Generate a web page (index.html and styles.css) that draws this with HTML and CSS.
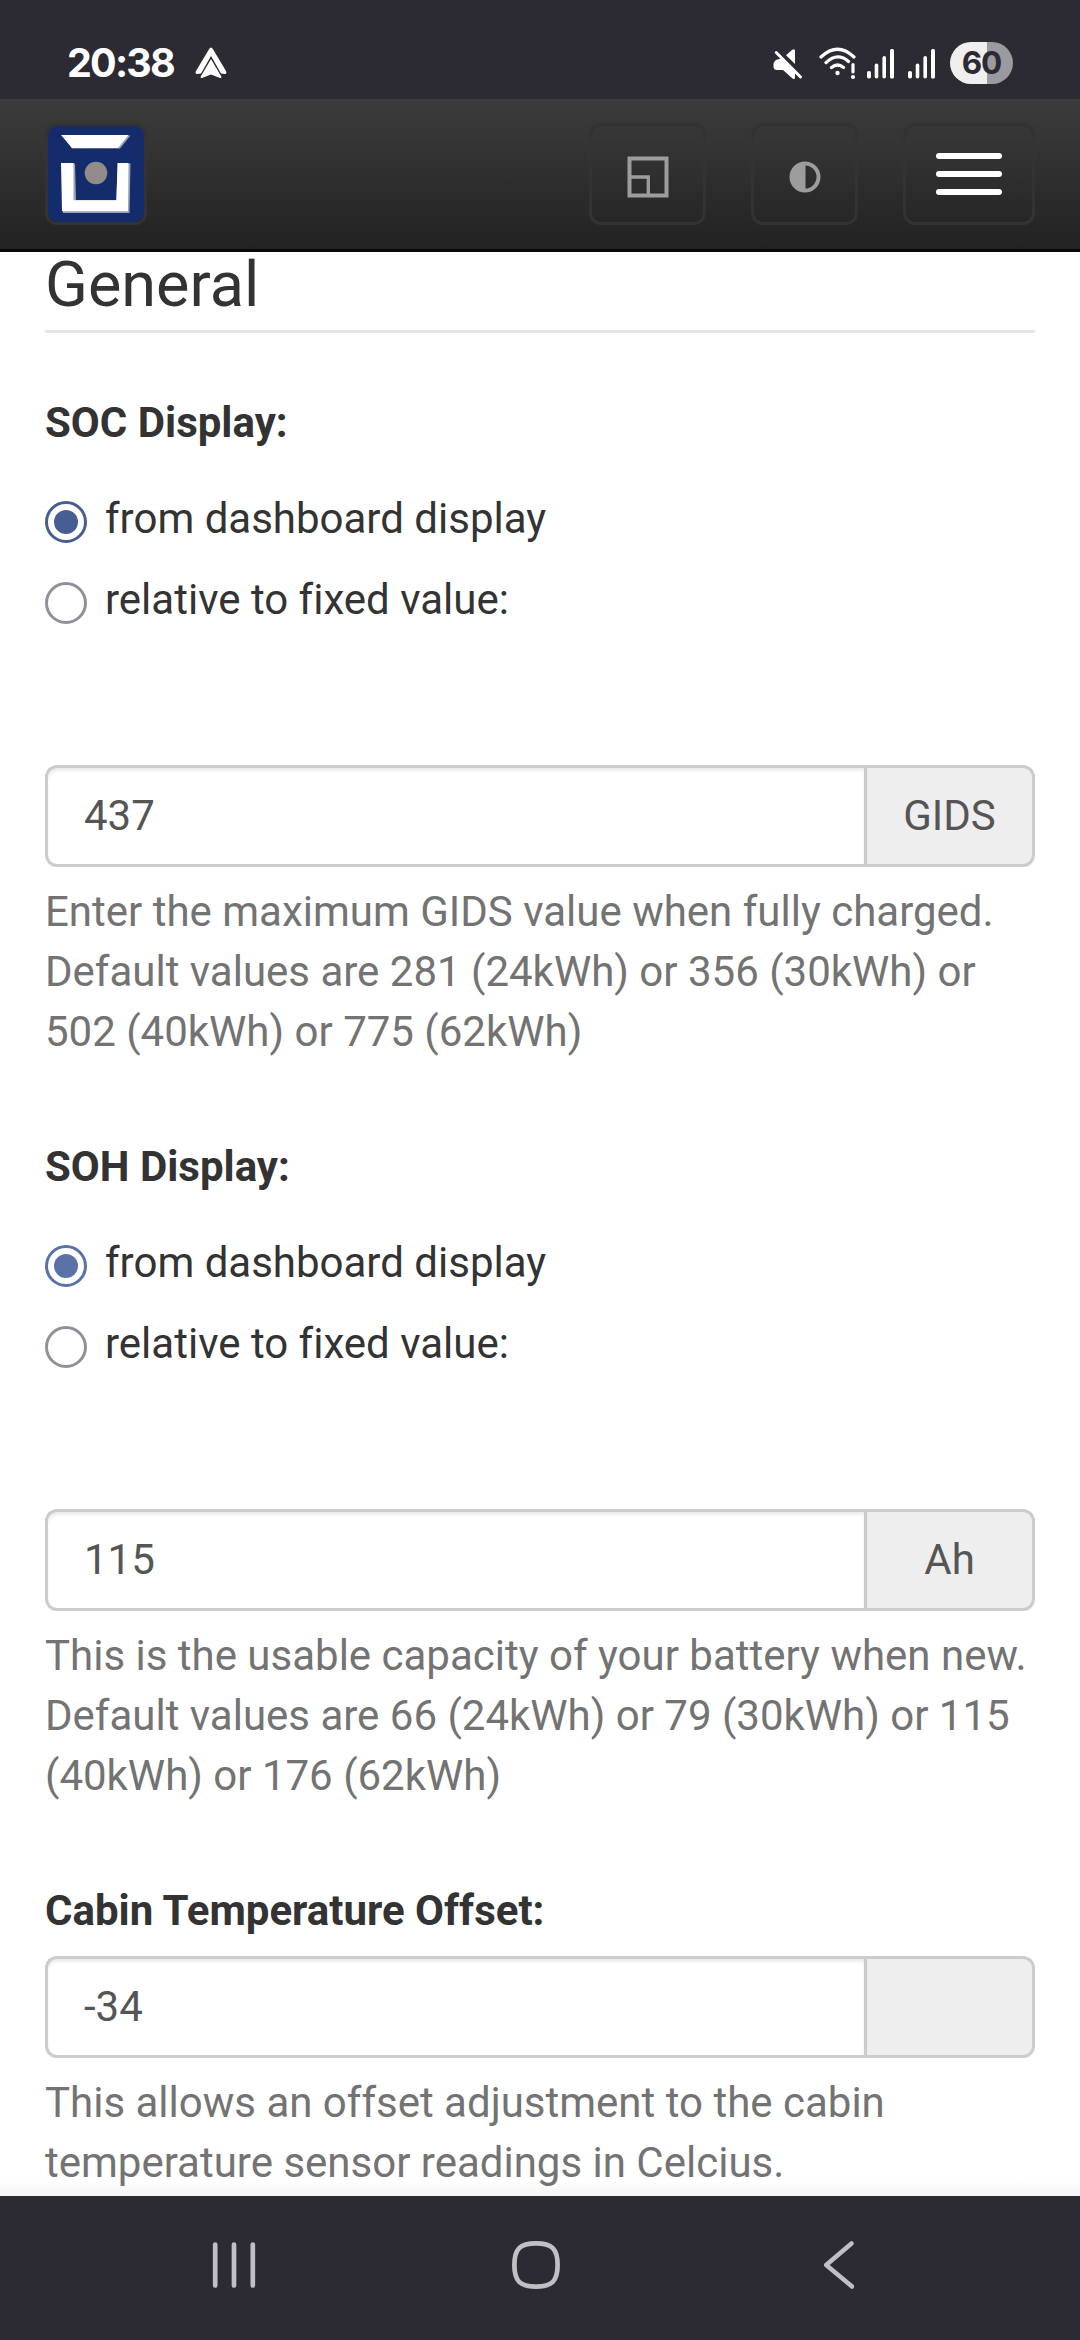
FILE: index.html
```html
<!DOCTYPE html>
<html lang="en">
<head>
<meta charset="utf-8">
<title>General</title>
<link rel="stylesheet" href="styles.css">
</head>
<body>
<div class="screen">
  <div class="statusbar">
    <span class="clock">20:38</span>
    <svg class="auto-icon" width="32" height="32" viewBox="0 0 32 32" fill="#fff"><path d="M14 2.2Q16 -1 18 2.2L31 24Q32.3 27.2 29.5 27L26 26.5L16 9L6 26.5L2.500 27Q-.3 27.200 1 24Z"/><path d="M16 12L26.300 29.500Q26.800 31.500 25 31L16 27.500L7 31Q5.200 31.500 5.700 29.500Z"/></svg>
    <div class="status-icons">
      <svg class="mute" width="30" height="32" viewBox="0 0 30 32"><path fill="#fff" d="M1.500 12.500Q3 10 7 10L10 9.800L22 22V28.500Q22 31 19.500 29.500L10 21H4Q.500 21 .500 17.500V14.500ZM13 6.200L19 1Q22 -1 22 2V15Z"/><path d="M3.200 3.500L27.500 28" stroke="#fff" stroke-width="3" stroke-linecap="round"/></svg>
      <svg class="wifi" width="38" height="33" viewBox="0 0 38 33" fill="none" stroke="#fff" stroke-width="3.200" stroke-linecap="round"><path d="M2 10Q18.500 -5.500 35 10M7 15.600Q18.500 4.800 29.500 14.500M12.500 20.500Q18.500 15.500 24.500 20.500M34 17.500V25"/><circle cx="18.500" cy="26" r="2.200" fill="#fff" stroke="none"/><circle cx="34" cy="30" r="2.100" fill="#fff" stroke="none"/></svg>
      <svg class="signal" width="28" height="30" viewBox="0 0 28 30" fill="#fff"><rect x="0" y="22" width="4" height="7.500" rx="1.800"/><rect x="7.700" y="14.500" width="3.600" height="15" rx="1.800"/><rect x="15.400" y="7" width="3.600" height="22.500" rx="1.800"/><rect x="23" y="0" width="4" height="29.500" rx="1.500"/></svg>
      <svg class="signal" width="28" height="30" viewBox="0 0 28 30" fill="#fff"><rect x="0" y="22" width="4" height="7.500" rx="1.800"/><rect x="7.700" y="14.500" width="3.600" height="15" rx="1.800"/><rect x="15.400" y="7" width="3.600" height="22.500" rx="1.800"/><rect x="23" y="0" width="4" height="29.500" rx="1.500"/></svg>
      <span class="battery">60</span>
    </div>
  </div>

  <header class="navbar">
    <a class="brand">
      <svg width="96" height="96" viewBox="0 0 96 96"><rect width="96" height="96" rx="10" fill="#142b6c"/><path fill="#98a3b8" d="M15 9.500H82.500L72 22.500H24ZM14 37.500H27L28 74H68L70 37.500H82.500L81.500 87H15Z"/><path fill="#fff" d="M13 9H80.500L70 22H24ZM13 37H25.500V74.300H68.500L69.500 37H80.500L80 85.300H14Z"/><circle cx="48" cy="47" r="11.300" fill="#928b89"/></svg>
    </a>
    <div class="nav-buttons">
      <button class="nav-btn size-btn"><svg width="42" height="42" viewBox="0 0 42 42" fill="none" stroke="#9d9d9d"><path stroke-width="4" d="M2.500 2.500H39.500V39.500H2.500Z"/><path stroke-width="3.300" d="M3 21H21.300V38"/></svg></button>
      <button class="nav-btn contrast-btn"><svg width="32" height="32" viewBox="0 0 32 32"><circle cx="16" cy="16" r="13.500" fill="none" stroke="#9d9d9d" stroke-width="4"/><path fill="#9d9d9d" d="M16.500 2A14 14 0 0 0 16.500 30Z"/></svg></button>
      <button class="nav-btn menu-btn"><span class="icon-bar"></span><span class="icon-bar"></span><span class="icon-bar"></span></button>
    </div>
  </header>

  <main class="content">
    <h2 class="legend">General</h2>

    <section class="form-group">
      <div class="label">SOC Display:</div>
      <div class="radios">
        <label class="radio"><input type="radio" name="soc" checked>from dashboard display</label>
        <label class="radio"><input type="radio" name="soc">relative to fixed value:</label>
      </div>
      <div class="input-group"><input class="field" type="text" value="437"><span class="addon">GIDS</span></div>
      <p class="help">Enter the maximum GIDS value when fully charged. Default values are 281 (24kWh) or 356 (30kWh) or 502 (40kWh) or 775 (62kWh)</p>
    </section>

    <section class="form-group">
      <div class="label">SOH Display:</div>
      <div class="radios">
        <label class="radio light"><input type="radio" name="soh" checked>from dashboard display</label>
        <label class="radio"><input type="radio" name="soh">relative to fixed value:</label>
      </div>
      <div class="input-group"><input class="field" type="text" value="115"><span class="addon">Ah</span></div>
      <p class="help">This is the usable capacity of your battery when new. Default values are 66 (24kWh) or 79 (30kWh) or 115 (40kWh) or 176 (62kWh)</p>
    </section>

    <section class="form-group">
      <div class="label">Cabin Temperature Offset:</div>
      <div class="input-group"><input class="field" type="text" value="-34"><span class="addon"></span></div>
      <p class="help">This allows an offset adjustment to the cabin temperature sensor readings in Celcius.</p>
    </section>
  </main>

  <nav class="sysnav">
    <svg width="44" height="48" viewBox="0 0 44 48" fill="none" stroke="#c0bfc4" stroke-width="4.700" stroke-linecap="round"><path d="M3.200 3.500V44.500M22 3.500V44.500M40.800 3.500V44.500"/></svg>
    <svg class="home" width="48" height="48" viewBox="0 0 48 48" fill="none" stroke="#c0bfc4" stroke-width="4.700"><path d="M24 2.400C40 2.400 45.600 8 45.600 24S40 45.600 24 45.600S2.400 40 2.400 24S8 2.400 24 2.400Z"/></svg>
    <svg width="30" height="48" viewBox="0 0 30 48" fill="none" stroke="#c0bfc4" stroke-width="4.500" stroke-linecap="round" stroke-linejoin="round"><path d="M27.500 2.500L2.200 24L28 45.500"/></svg>
  </nav>
</div>
</body>
</html>
```
FILE: styles.css
```css
* { box-sizing: border-box; }
body {
  margin: 0;
  background: #fff;
  color: #333;
  font: 42px/60px Roboto, sans-serif;
  font-variant-ligatures: none;
}
.screen {
  display: flex;
  flex-direction: column;
  width: 1080px;
  height: 2340px;
  overflow: hidden;
}

/* Status bar */
.statusbar {
  display: flex;
  align-items: flex-start;
  flex: none;
  height: 99px;
  padding: 42px 67px 0;
  background: #2c2a33;
  color: #fff;
}
.clock {
  width: 128px;
  font: 700 39.500px/42px Inter, sans-serif;
  letter-spacing: -1.800px;
}
.auto-icon { margin-top: 5px; }
.status-icons {
  display: flex;
  align-items: flex-start;
  margin-left: auto;
}
.mute { margin: 7px 16px 0 0; }
.wifi { margin: 5px 10px 0 0; }
.signal { margin: 7px 13px 0 0; }
.signal + .battery { margin-left: 1px; }
.battery {
  width: 63px;
  height: 42px;
  border-radius: 21px;
  background: linear-gradient(90deg, #efefef 37.500px, #9b9a9f 37.500px);
  color: #2c2a33;
  font: 700 31.500px/41px Inter, sans-serif;
  letter-spacing: -1px;
  text-align: center;
}

/* Navigation bar */
.navbar {
  display: flex;
  justify-content: space-between;
  align-items: flex-start;
  flex: none;
  height: 153px;
  padding: 24px 45px 0;
  border-bottom: 3px solid #080808;
  background: linear-gradient(#3c3c3c, #222);
}
.brand {
  width: 102px;
  height: 102px;
  border: 3px solid #333;
  border-radius: 12px;
  line-height: 0;
}
.nav-buttons {
  display: flex;
  gap: 45px;
}
.nav-btn {
  display: flex;
  align-items: center;
  justify-content: center;
  height: 102px;
  padding: 5px 0 0;
  border: 3px solid #333;
  border-radius: 12px;
  background: none;
}
.size-btn { width: 117px; }
.contrast-btn { width: 107px; }
.menu-btn {
  flex-direction: column;
  gap: 12px;
  width: 132px;
  padding: 0;
}
.icon-bar {
  width: 66px;
  height: 6px;
  border-radius: 3px;
  background: #fff;
}

/* Settings form */
.content {
  flex: 1;
  min-height: 0;
  overflow: hidden;
  padding: 0 45px;
  background: linear-gradient(transparent calc(100% - 15px), #f4f4f4) #fff;
}
.legend {
  height: 81px;
  margin: 0 0 60px;
  border-bottom: 3px solid #e5e5e5;
  font-size: 63px;
  font-weight: 400;
  line-height: 66px;
}
.form-group { margin-bottom: 75px; }
.label {
  margin-bottom: 15px;
  font-weight: 700;
}
.radios {
  display: flex;
  flex-direction: column;
  gap: 21px;
  padding: 21px 0 135px;
}
.radio {
  display: flex;
  align-items: flex-start;
  gap: 18px;
}
.radio input {
  display: grid;
  place-content: center;
  flex: none;
  width: 42px;
  height: 42px;
  margin: 12px 0 0;
  border: 3px solid #918f9c;
  border-radius: 50%;
  appearance: none;
}
.radio input:checked { border-color: #485d92; }
.radio input:checked::before {
  content: "";
  width: 24px;
  height: 24px;
  border-radius: 50%;
  background: #485d92;
}
.radio.light input:checked { border-color: #5b72a9; }
.radio.light input:checked::before { background: #5b72a9; }
.input-group {
  display: flex;
  height: 102px;
}
.field {
  flex: 1;
  min-width: 0;
  padding: 0 36px;
  border: 3px solid #ccc;
  border-right: 0;
  border-radius: 12px 0 0 12px;
  background: #fff;
  box-shadow: inset 0 3px 3px rgba(0, 0, 0, 0.075);
  color: #555;
  font: inherit;
}
.addon {
  width: 171px;
  border: 3px solid #ccc;
  border-radius: 0 12px 12px 0;
  background: #eee;
  color: #555;
  line-height: 96px;
  text-align: center;
}
.help {
  margin: 15px 0 0;
  color: #737373;
}

/* System navigation */
.sysnav {
  display: flex;
  align-items: flex-start;
  justify-content: space-between;
  flex: none;
  height: 144px;
  padding: 45px 226px 0 212px;
  background: #2c2a33;
}
.home { margin-right: 8px; }
```
